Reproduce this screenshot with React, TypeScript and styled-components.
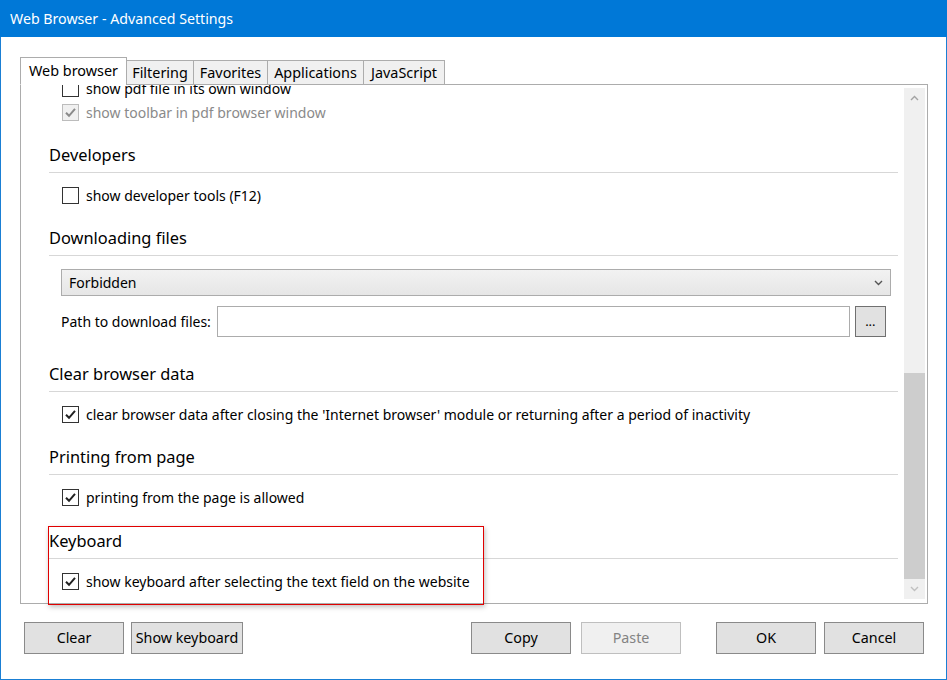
import React from "react";
import styled, { createGlobalStyle } from "styled-components";

const Global = createGlobalStyle`
  html, body { margin: 0; padding: 0; background: #ffffff; }
  body { font-family: "Noto Sans", "Open Sans", sans-serif; color: #000; }
  * { box-sizing: border-box; }
`;

const Window = styled.div`
  position: relative;
  width: 947px;
  height: 680px;
  border: 1px solid #1a7fd4;
  border-top: none;
  background: #fff;
  display: flex;
  flex-direction: column;
`;

const TitleBar = styled.div`
  height: 37px;
  margin: 0 -1px;
  background: #0078d7;
  color: #fff;
  font-size: 14.2px;
  display: flex;
  align-items: center;
  padding-left: 10px;
`;

const Body = styled.div`
  padding: 21px 19px 0 19px;
  display: flex;
  flex-direction: column;
`;

const TabStrip = styled.div`
  display: flex;
  align-items: flex-end;
  height: 27px;
  position: relative;
  z-index: 1;
  margin-bottom: -1px;
`;

const Tab = styled.div<{ $active?: boolean; $w: number }>`
  width: ${(p) => p.$w}px;
  height: ${(p) => (p.$active ? 28 : 25)}px;
  display: flex;
  align-items: center;
  justify-content: center;
  padding-bottom: ${(p) => (p.$active ? 2 : 1)}px;
  font-size: 14.4px;
  border: 1px solid #acacac;
  border-bottom: ${(p) => (p.$active ? "1px solid #fff" : "1px solid #acacac")};
  background: ${(p) => (p.$active ? "#fff" : "#f0f0f0")};
  margin-left: ${(p) => (p.$active ? 0 : -1)}px;
  &:first-child { margin-left: 0; }
`;

const Panel = styled.div`
  width: 908px;
  height: 520px;
  border: 1px solid #acacac;
  display: flex;
  overflow: hidden;
`;

const Content = styled.div`
  flex: 1;
  overflow: hidden;
  padding: 0 6px 0 28px;
`;

const Scrolled = styled.div`
  margin-top: -8px;
  display: flex;
  flex-direction: column;
`;

const Section = styled.div<{ $top?: number }>`
  display: flex;
  flex-direction: column;
  padding-top: ${(p) => p.$top ?? 20}px;
`;

const SectionTitle = styled.div`
  height: 24px;
  line-height: 24px;
  font-size: 16.4px;
  margin-bottom: 5px;
`;

const Separator = styled.div`
  height: 1px;
  background: #d7d7d7;
`;

const SectionBody = styled.div<{ $top?: number; $gap?: number }>`
  padding-top: ${(p) => p.$top ?? 11}px;
  display: flex;
  flex-direction: column;
  gap: ${(p) => p.$gap ?? 1}px;
`;

const CheckRow = styled.label<{ $disabled?: boolean }>`
  height: 22px;
  display: flex;
  align-items: center;
  gap: 7px;
  padding-left: 13px;
  font-size: 14px;
  color: ${(p) => (p.$disabled ? "#8a8a8a" : "#000")};
`;

const Box = styled.span<{ $disabled?: boolean }>`
  width: 17px;
  height: 17px;
  flex: none;
  border: 1px solid ${(p) => (p.$disabled ? "#bcbcbc" : "#333")};
  background: ${(p) => (p.$disabled ? "#f0f0f0" : "#fff")};
  display: flex;
  align-items: center;
  justify-content: center;
`;

const Select = styled.div`
  margin-left: 12px;
  margin-right: 7px;
  height: 27px;
  border: 1px solid #acacac;
  background: linear-gradient(#f2f2f2, #e6e6e6);
  display: flex;
  align-items: center;
  justify-content: space-between;
  padding: 0 7px 0 7px;
  font-size: 14px;
`;

const PathRow = styled.div`
  margin-top: 9px;
  margin-left: 12px;
  display: flex;
  align-items: center;
  height: 31px;
  font-size: 14px;
`;

const PathLabel = styled.span`
  margin-right: 6px;
`;

const PathInput = styled.div`
  width: 633px;
  height: 31px;
  border: 1px solid #acacac;
  background: #fff;
`;

const DotsButton = styled.div`
  width: 31px;
  height: 31px;
  margin-left: 5px;
  border: 1px solid #707070;
  background: #e1e1e1;
  font-size: 13px;
  display: flex;
  align-items: center;
  justify-content: center;
  padding-bottom: 2px;
`;

const ScrollBar = styled.div`
  width: 21px;
  margin: 3px 2px 4px 0;
  background: #f0f0f0;
  display: flex;
  flex-direction: column;
`;

const ScrollArrow = styled.div`
  height: 20px;
  display: flex;
  align-items: center;
  justify-content: center;
`;

const ScrollTrack = styled.div`
  flex: 1;
  display: flex;
  flex-direction: column;
  justify-content: flex-end;
`;

const ScrollThumb = styled.div`
  height: 206px;
  background: #cdcdcd;
`;

const ButtonBar = styled.div`
  display: flex;
  margin-top: 18px;
  padding: 0 3px 0 4px;
`;

const ButtonGroup = styled.div<{ $gap: number; $ml?: string }>`
  display: flex;
  gap: ${(p) => p.$gap}px;
  margin-left: ${(p) => p.$ml ?? "0"};
`;

const Button = styled.div<{ $w?: number; $disabled?: boolean }>`
  width: ${(p) => p.$w ?? 100}px;
  height: 32px;
  border: 1px solid ${(p) => (p.$disabled ? "#bfbfbf" : "#8a8a8a")};
  background: ${(p) => (p.$disabled ? "#f0f0f0" : "#e1e1e1")};
  color: ${(p) => (p.$disabled ? "#838383" : "#000")};
  font-size: 14.3px;
  display: flex;
  align-items: center;
  justify-content: center;
  padding-bottom: 1px;
`;

const Highlight = styled.div`
  position: absolute;
  left: 47px;
  top: 526px;
  width: 436px;
  height: 79px;
  border: 1px solid #e00000;
  box-shadow: 1px 2px 5px rgba(0, 0, 0, 0.25);
  pointer-events: none;
`;

const Check = ({ on, disabled }: { on?: boolean; disabled?: boolean }) => (
  <Box $disabled={disabled}>
    {on && (
      <svg width="13" height="13" viewBox="0 0 13 13">
        <path
          d="M2 6.8 L5 9.8 L11 2.8"
          fill="none"
          stroke={disabled ? "#8a8a8a" : "#222"}
          strokeWidth="2"
        />
      </svg>
    )}
  </Box>
);

const Row = ({
  text,
  on,
  disabled,
}: {
  text: string;
  on?: boolean;
  disabled?: boolean;
}) => (
  <CheckRow $disabled={disabled}>
    <Check on={on} disabled={disabled} />
    {text}
  </CheckRow>
);

const Chevron = ({ up, color }: { up?: boolean; color: string }) => (
  <svg width="9" height="6" viewBox="0 0 9 6">
    <path
      d={up ? "M1 5 L4.5 1.5 L8 5" : "M1 1 L4.5 4.5 L8 1"}
      fill="none"
      stroke={color}
      strokeWidth="1.4"
    />
  </svg>
);

export default function App() {
  return (
    <>
      <Global />
      <Window>
        <TitleBar>Web Browser - Advanced Settings</TitleBar>
        <Body>
          <TabStrip>
            <Tab $active $w={107}>Web browser</Tab>
            <Tab $w={68}>Filtering</Tab>
            <Tab $w={75}>Favorites</Tab>
            <Tab $w={97}>Applications</Tab>
            <Tab $w={82}>JavaScript</Tab>
          </TabStrip>
          <Panel>
            <Content>
              <Scrolled>
                <SectionBody $top={0} $gap={2}>
                  <Row text="show pdf file in its own window" />
                  <Row text="show toolbar in pdf browser window" on disabled />
                </SectionBody>
                <Section>
                  <SectionTitle>Developers</SectionTitle>
                  <Separator />
                  <SectionBody>
                    <Row text="show developer tools (F12)" />
                  </SectionBody>
                </Section>
                <Section>
                  <SectionTitle>Downloading files</SectionTitle>
                  <Separator />
                  <SectionBody $top={13}>
                    <Select>
                      <span>Forbidden</span>
                      <Chevron color="#555" />
                    </Select>
                    <PathRow>
                      <PathLabel>Path to download files:</PathLabel>
                      <PathInput />
                      <DotsButton>...</DotsButton>
                    </PathRow>
                  </SectionBody>
                </Section>
                <Section $top={25}>
                  <SectionTitle>Clear browser data</SectionTitle>
                  <Separator />
                  <SectionBody>
                    <Row
                      text="clear browser data after closing the 'Internet browser' module or returning after a period of inactivity"
                      on
                    />
                  </SectionBody>
                </Section>
                <Section>
                  <SectionTitle>Printing from page</SectionTitle>
                  <Separator />
                  <SectionBody>
                    <Row text="printing from the page is allowed" on />
                  </SectionBody>
                </Section>
                <Section $top={21}>
                  <SectionTitle>Keyboard</SectionTitle>
                  <Separator />
                  <SectionBody>
                    <Row
                      text="show keyboard after selecting the text field on the website"
                      on
                    />
                  </SectionBody>
                </Section>
              </Scrolled>
            </Content>
            <ScrollBar>
              <ScrollArrow>
                <Chevron up color="#a3a3a3" />
              </ScrollArrow>
              <ScrollTrack>
                <ScrollThumb />
              </ScrollTrack>
              <ScrollArrow>
                <Chevron color="#c0c0c0" />
              </ScrollArrow>
            </ScrollBar>
          </Panel>
          <ButtonBar>
            <ButtonGroup $gap={7}>
              <Button>Clear</Button>
              <Button $w={112}>Show keyboard</Button>
            </ButtonGroup>
            <ButtonGroup $gap={10} $ml="228px">
              <Button>Copy</Button>
              <Button $disabled>Paste</Button>
            </ButtonGroup>
            <ButtonGroup $gap={8} $ml="auto">
              <Button>OK</Button>
              <Button>Cancel</Button>
            </ButtonGroup>
          </ButtonBar>
        </Body>
        <Highlight />
      </Window>
    </>
  );
}
